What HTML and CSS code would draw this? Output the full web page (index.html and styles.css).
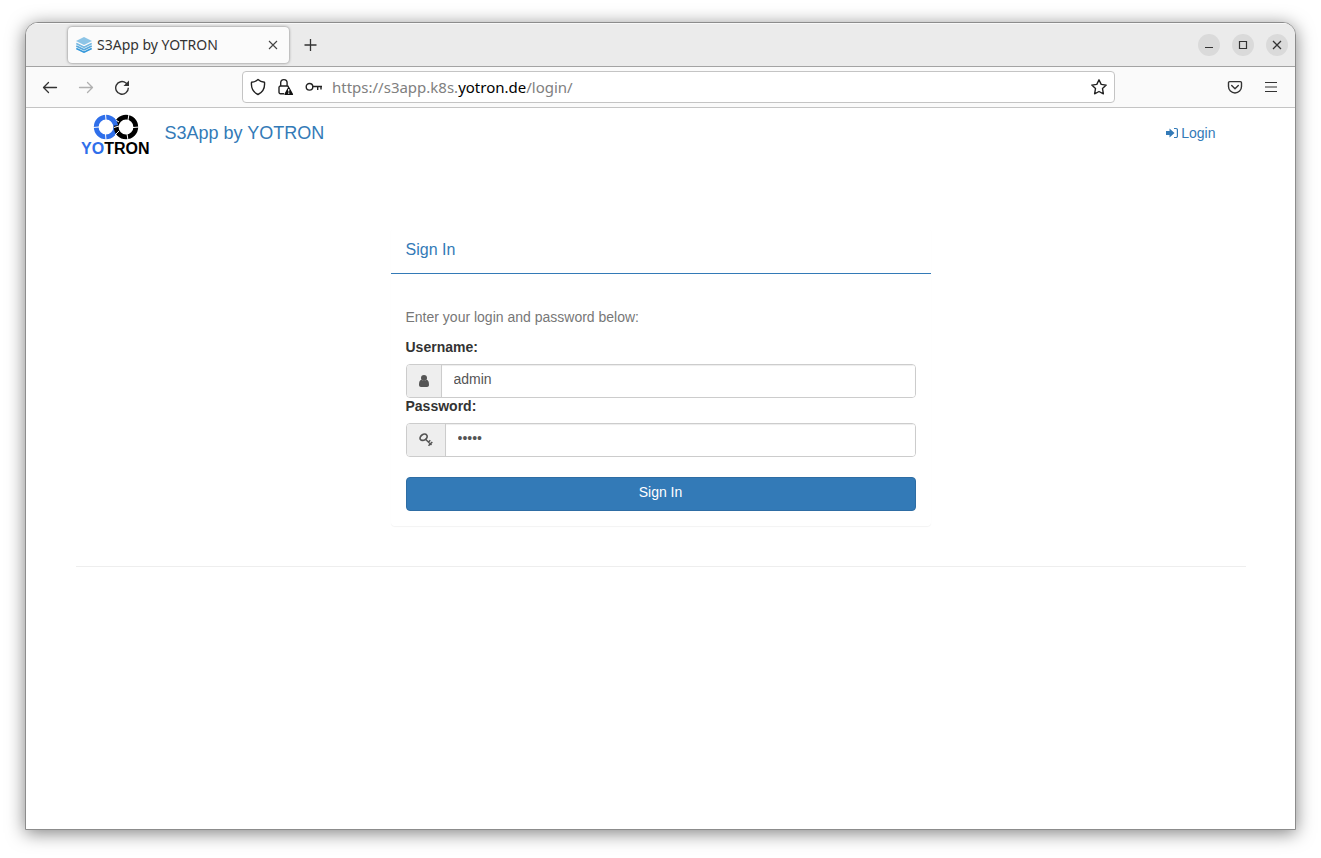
FILE: index.html
```html
<!DOCTYPE html>
<html lang="en">
<head>
<meta charset="utf-8">
<title>S3App by YOTRON</title>
<link rel="stylesheet" href="styles.css">
</head>
<body>
<div class="window">
  <header class="tabbar">
    <div class="tab">
      <svg class="favicon" width="16" height="16" viewBox="0 0 16 16" fill="none">
        <path d="M0 4 8 0l8 4-8 4z" fill="#8cc4e6"/>
        <path d="M.3 6.500 8 10.300l7.700-3.800" stroke="#74b8e2" stroke-width="1.600"/>
        <path d="M.3 9 8 12.800 15.700 9" stroke="#57a8dc" stroke-width="1.600"/>
        <path d="M.3 11.400 8 15.200l7.700-3.800" stroke="#3498db" stroke-width="1.600"/>
      </svg>
      <span class="tab-title">S3App by YOTRON</span>
      <button class="icon-btn" type="button" aria-label="Close tab">
        <svg width="16" height="16" viewBox="0 0 16 16" stroke="#444" stroke-width="1.100"><path d="m4 4 8 8m0-8-8 8"/></svg>
      </button>
    </div>
    <button class="icon-btn new-tab" type="button" aria-label="New tab">
      <svg width="16" height="16" viewBox="0 0 16 16" stroke="#333" stroke-width="1.300"><path d="M7.500 2v12M1.500 8h12"/></svg>
    </button>
    <div class="window-controls">
      <button class="control" type="button" aria-label="Minimize"><svg width="22" height="22" stroke="#333" stroke-width="1"><path d="M7 13.500h8"/></svg></button>
      <button class="control" type="button" aria-label="Maximize"><svg width="22" height="22" fill="none" stroke="#333" stroke-width="1.200"><path d="M7.500 7.500h7v7h-7z"/></svg></button>
      <button class="control" type="button" aria-label="Close"><svg width="22" height="22" stroke="#333" stroke-width="1.300"><path d="m7 7 8 8m0-8-8 8"/></svg></button>
    </div>
  </header>
  <nav class="toolbar">
    <div class="nav-buttons">
      <button class="icon-btn" type="button" aria-label="Back"><svg width="16" height="16" fill="none" stroke="#333" stroke-width="1.300" stroke-linecap="round" stroke-linejoin="round"><path d="M14.500 8.500h-13M6.500 3.500l-5 5 5 5"/></svg></button>
      <button class="icon-btn" type="button" aria-label="Forward"><svg width="16" height="16" fill="none" stroke="#b0b0b0" stroke-width="1.300" stroke-linecap="round" stroke-linejoin="round"><path d="M1.500 8.500h13M9.500 3.500l5 5-5 5"/></svg></button>
      <button class="icon-btn" type="button" aria-label="Reload"><svg width="16" height="16" fill="none" stroke="#333" stroke-width="1.400"><path d="M14.300 8.800A6.300 6.300 0 1 1 12 4l1.500 1.500"/><path d="M15 1.500V7H9.500z" fill="#333" stroke="none"/></svg></button>
    </div>
    <div class="address">
      <svg width="16" height="18" fill="none" stroke="#222" stroke-width="1.400" stroke-linejoin="round"><path d="M8 1.500C9.500 3 12 4 14.500 4.200c.6 6-1.700 10-6.500 12.300C3.200 14.200.9 10.200 1.500 4.200 4 4 6.500 3 8 1.500z"/></svg>
      <svg width="18" height="18" fill="none" stroke="#222" stroke-width="1.400"><path d="M8 15.800H4.500A1.500 1.500 0 0 1 3 14.300V9.500A1.500 1.500 0 0 1 4.500 8h6.500A1.500 1.500 0 0 1 12.500 9M4.700 8V4.800a3.200 3.200 0 0 1 6.400 0V8"/><path d="m12.700 9.500 3.700 6.800H9z" fill="#111" stroke="#111" stroke-linejoin="round"/><path d="M12.700 11v2.500m0 1v1.200" stroke="#fff" stroke-width="1.200"/></svg>
      <svg width="18" height="16" fill="none" stroke="#222" stroke-width="1.400"><circle cx="5.500" cy="7.800" r="3.300"/><path d="M8.800 7.500H18M13.700 8v3m3.300-3v2.500"/></svg>
      <a class="url" href="#login">https://s3app.k8s.<span class="host">yotron.de</span>/login/</a>
      <button class="icon-btn" type="button" aria-label="Bookmark this page"><svg width="18" height="18" viewBox="0 0 18 18" fill="none" stroke="#222" stroke-width="1.400" stroke-linejoin="round"><path d="m9 1.800 2.200 4.600 5 .7-3.700 3.500.9 5.200L9 13.500l-4.400 2.300.9-5.200L1.800 7.100l5-.7z"/></svg></button>
    </div>
    <div class="tools">
      <button class="icon-btn" type="button" aria-label="Save to Pocket"><svg width="16" height="16" fill="none" stroke="#333" stroke-width="1.400" stroke-linecap="round" stroke-linejoin="round"><path d="M2.700 2.600h10.600a1.200 1.200 0 0 1 1.200 1.200V7.500A6.500 6.500 0 0 1 1.500 7.500V3.800a1.200 1.200 0 0 1 1.200-1.200zM4.700 6.500 8 9.700 11.300 6.500"/></svg></button>
      <button class="icon-btn" type="button" aria-label="Menu"><svg width="16" height="16" stroke="#333" stroke-width="1.200"><path d="M2 3.500h12M2 8h12M2 12.500h12"/></svg></button>
    </div>
  </nav>
  <main class="page">
    <div class="container">
      <div class="site-nav">
        <a class="brand" href="#home">
          <svg width="74" height="46" viewBox="0 0 74 46" fill="none" stroke-width="4.800" role="img" aria-label="YOTRON">
            <circle cx="27" cy="17" r="9.800" stroke="#2f6fea"/>
            <path d="m26.500 4 .5 6M14 17.500l6-.5m6.500 7 .5 6" stroke="#fff" stroke-width="1"/>
            <circle cx="47" cy="17" r="9.800" stroke="#000"/>
            <path d="m50 4-1 6m5 7.500 6-.5m-12 7 1 6M40 21l-4 4m4-13-5-3" stroke="#fff" stroke-width="1"/>
            <path d="M33.500 9.500a9.800 9.800 0 0 1 3.300 6" stroke="#2f6fea" stroke-width="4.800"/>
            <path d="m35 17.500 5-1.500" stroke="#fff" stroke-width="1"/>
            <text class="logo-text" x="2" y="44"><tspan fill="#2f6fea">YO</tspan><tspan fill="#000">TRON</tspan></text>
          </svg>
          <span class="brand-name">S3App by YOTRON</span>
        </a>
        <a class="login-link" href="#login">
          <svg width="12" height="12" viewBox="0 0 12 12"><path d="M0 4h3.500V1.500L8.500 6l-5 4.500V8H0z" fill="#337ab7"/><path d="M8 1.500h2a1.400 1.400 0 0 1 1.400 1.500v6A1.400 1.400 0 0 1 10 10.500H8" fill="none" stroke="#337ab7" stroke-width="1.200"/></svg>
          Login</a>
      </div>
      <form class="panel">
        <h1 class="panel-title">Sign In</h1>
        <div class="panel-body">
          <p class="hint">Enter your login and password below:</p>
          <label class="label" for="username">Username:</label>
          <div class="input-group">
            <span class="addon"><svg width="10" height="14" viewBox="0 0 10 14" fill="#555"><circle cx="5" cy="4" r="3"/><path d="M2.500 5.800C.7 6.200 0 8 0 10.800 0 12.200.8 13 2 13h6c1.200 0 2-.8 2-2.200 0-2.800-.7-4.600-2.500-5-1.400 1.600-3.600 1.600-5 0z"/></svg></span>
            <input class="field" id="username" type="text" value="admin">
          </div>
          <label class="label" for="password">Password:</label>
          <div class="input-group">
            <span class="addon"><svg width="14" height="14" viewBox="0 0 14 14" fill="none" stroke="#555"><ellipse cx="4.600" cy="4.300" rx="3.800" ry="2.800" stroke-width="1.700" transform="rotate(-35 4.600 4.300)"/><path d="m6.500 6.200 6 5.800m-3 .7 2-2m-.2-3.500-2 2m4-.2-2 2" stroke-width="1.500"/></svg></span>
            <input class="field" id="password" type="password" value="admin">
          </div>
          <button class="submit" type="submit">Sign In</button>
        </div>
      </form>
      <hr class="rule">
    </div>
  </main>
</div>
</body>
</html>
```
FILE: styles.css
```css
* { box-sizing: border-box; }

body {
  margin: 0;
  min-height: 100vh;
  padding: 22px 25px 28px;
  display: flex;
  background: #fff;
  font: 14px/20px "Liberation Sans", Arial, sans-serif;
  color: #333;
}

svg { display: block; flex: none; }

.window {
  flex: 1;
  display: flex;
  flex-direction: column;
  border: 1px solid #8c8c8c;
  border-radius: 13px 13px 0 0;
  background: #fff;
  box-shadow: 0 3px 18px rgba(0, 0, 0, 0.5);
  overflow: hidden;
}

.icon-btn {
  padding: 0;
  border: 0;
  background: none;
}

.tabbar {
  display: flex;
  align-items: center;
  height: 44px;
  padding: 1px 7px 0 42px;
  background: #ebebeb;
  border-bottom: 1px solid #a3a3a3;
  box-shadow: inset 0 1px #f8f8f8;
}

.tab {
  display: flex;
  align-items: center;
  gap: 5px;
  width: 221px;
  height: 36px;
  padding: 0 8px;
  border-radius: 4px;
  background: #fbfbfb;
  box-shadow: 0 0 3px rgba(0, 0, 0, 0.5);
  color: #333;
  font: 14px/20px "Noto Sans", sans-serif;
}

.tab-title { flex: 1; white-space: nowrap; }
.new-tab { margin-left: 14px; }

.window-controls {
  display: flex;
  gap: 12px;
  margin-left: auto;
}

.control {
  width: 22px;
  height: 22px;
  padding: 0;
  border: 0;
  border-radius: 50%;
  background: #dadada;
}

.toolbar {
  display: flex;
  align-items: center;
  height: 41px;
  padding: 0 16px;
  background: #fafafa;
  border-bottom: 1px solid #c4c4c4;
}

.nav-buttons, .tools { display: flex; gap: 20px; }

.address {
  flex: 1;
  display: flex;
  align-items: center;
  gap: 10px;
  height: 32px;
  margin: 0 112px;
  padding: 0 6px 0 7px;
  border: 1px solid #c4c4c4;
  border-radius: 4px;
  background: #fff;
}

.url {
  flex: 1;
  color: #808080;
  font: 15px/20px "Noto Sans", sans-serif;
  text-decoration: none;
}

.host { color: #000; }

.page { flex: 1; }

.container {
  max-width: 1170px;
  margin: 0 auto;
}

.site-nav {
  display: flex;
  align-items: center;
  justify-content: space-between;
  height: 50px;
  padding: 0 30px 0 3px;
}

.brand {
  display: flex;
  align-items: center;
  gap: 12px;
  color: #337ab7;
  text-decoration: none;
}

.brand-name { font-size: 18px; }
.logo-text { font: bold 16px "Liberation Sans", Arial, sans-serif; }

.login-link {
  display: flex;
  align-items: center;
  gap: 3px;
  color: #337ab7;
  text-decoration: none;
}

.panel {
  max-width: 540px;
  margin: 70px auto 40px;
  border-radius: 4px;
  box-shadow: 0 1px 1px rgba(0, 0, 0, 0.05);
}

.panel-title {
  margin: 0;
  padding: 12px 15px 13px;
  border-bottom: 1px solid #337ab7;
  color: #337ab7;
  font-size: 16px;
  font-weight: normal;
  line-height: 20px;
}

.panel-body { padding: 33px 15px 15px; }

.hint { margin: 0 0 12px; color: #777; }

.label {
  display: block;
  margin-bottom: 9px;
  font-weight: bold;
  line-height: 16px;
}

.input-group {
  display: flex;
  height: 34px;
  border: 1px solid #ccc;
  border-radius: 4px;
  overflow: hidden;
}

.addon {
  display: flex;
  align-items: center;
  padding: 0 12px;
  border-right: 1px solid #ccc;
  background: #eee;
}

.field {
  flex: 1;
  min-width: 0;
  padding: 0 12px 4px;
  border: 0;
  outline: 0;
  background: #fff;
  box-shadow: inset 0 1px 1px rgba(0, 0, 0, 0.075);
  color: #555;
  font: inherit;
}

.submit {
  display: block;
  width: 100%;
  height: 34px;
  margin-top: 20px;
  padding: 0 0 4px;
  border: 1px solid #2e6da4;
  border-radius: 4px;
  background: #337ab7;
  color: #fff;
  font: inherit;
}

.rule {
  margin: 0;
  border: 0;
  border-top: 1px solid #eee;
}
```
